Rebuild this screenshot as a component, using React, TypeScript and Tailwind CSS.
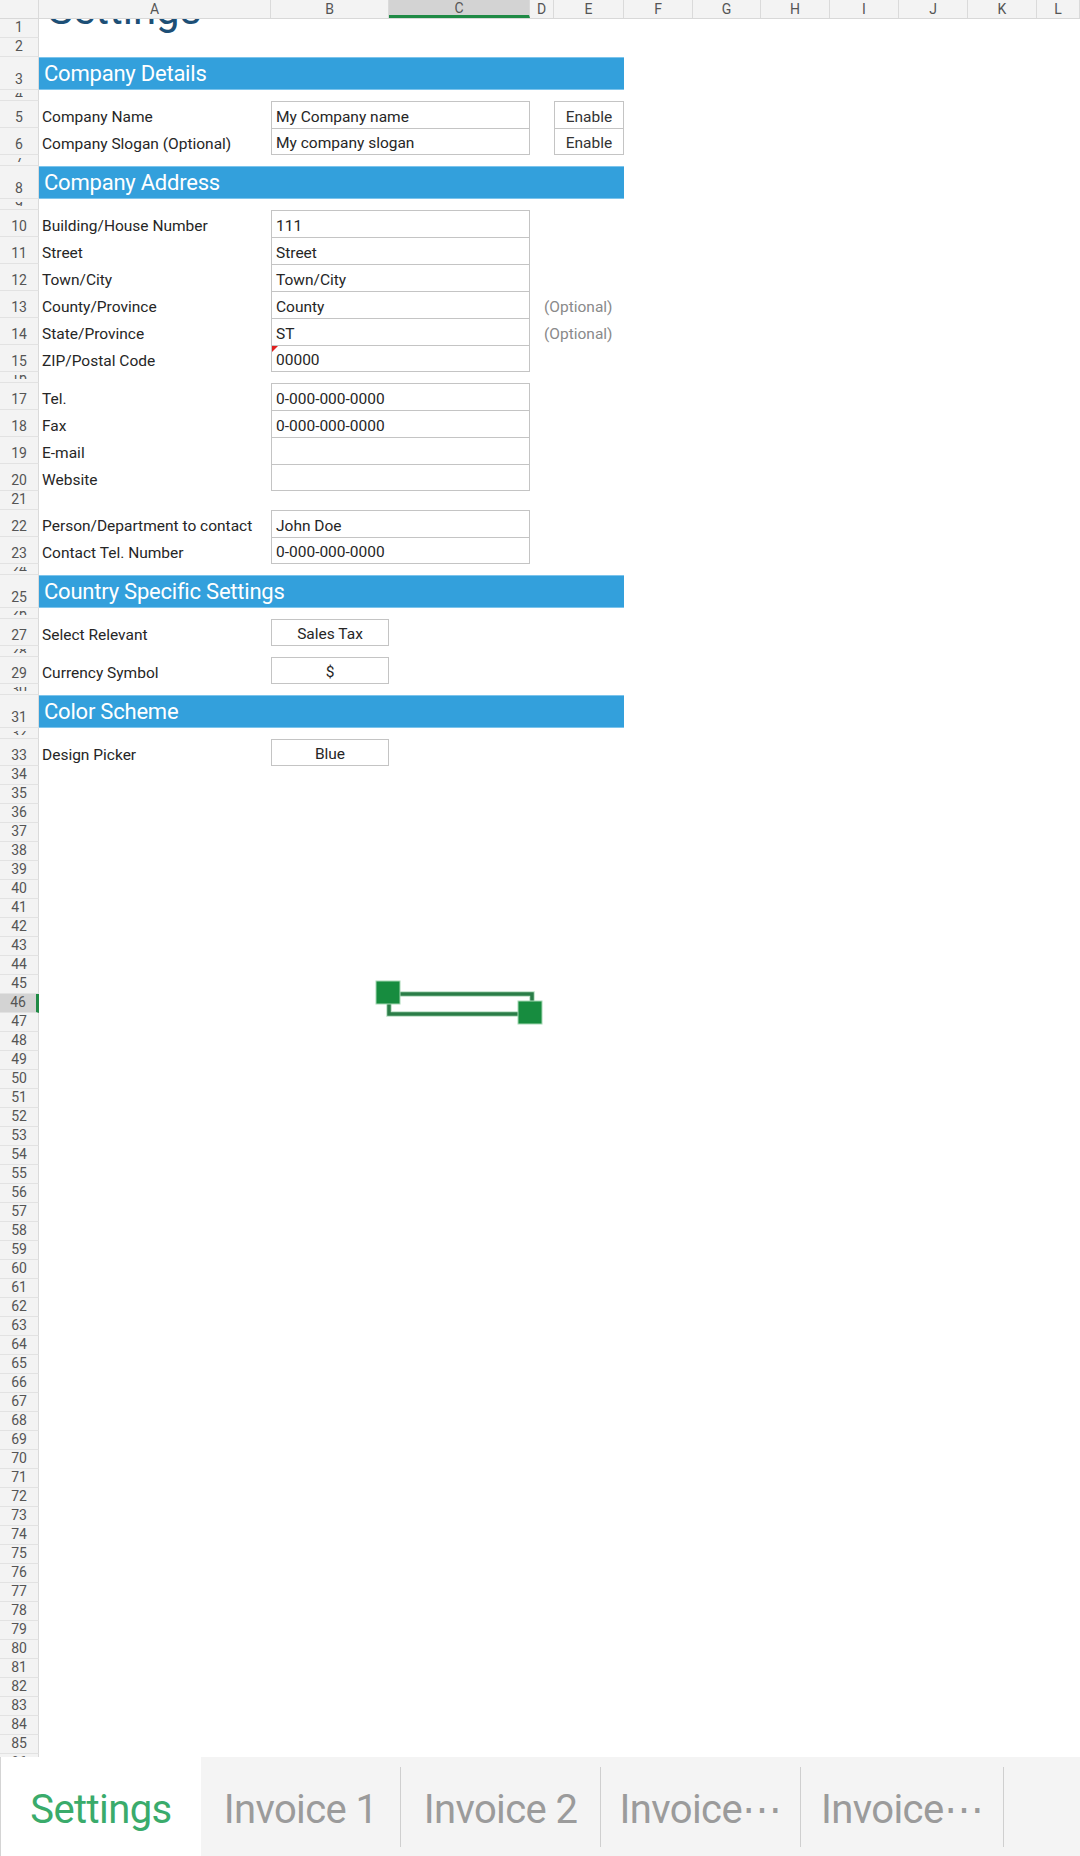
import React from "react";

type Col = { l: string; w: string; sel?: boolean };
const COLS: Col[] = [
  { l: "A", w: "w-[232px]" },
  { l: "B", w: "w-[118px]" },
  { l: "C", w: "w-[141px]", sel: true },
  { l: "D", w: "w-[24px]" },
  { l: "E", w: "w-[70px]" },
  { l: "F", w: "w-[69px]" },
  { l: "G", w: "w-[68px]" },
  { l: "H", w: "w-[69px]" },
  { l: "I", w: "w-[69px]" },
  { l: "J", w: "w-[69px]" },
  { l: "K", w: "w-[69px]" },
  { l: "L", w: "flex-1" },
];

function RowHeader({ n, sel, small }: { n: number; sel?: boolean; small?: boolean }) {
  const base = `w-[39px] shrink-0 flex justify-center overflow-hidden border-b border-[#e2e2e2] text-[14px] leading-[14px] text-[#555] ${
    sel ? "bg-[#d3d3d3] border-r-[3px] border-r-[#1f8a45]" : "bg-[#f3f3f3] border-r border-r-[#dadada]"
  }`;
  if (small) {
    return (
      <div className={`${base} items-center`}>
        <div className="h-[4px] overflow-hidden flex items-center">
          <span>{n}</span>
        </div>
      </div>
    );
  }
  return <div className={`${base} items-end pb-[3px]`}>{n}</div>;
}

function Row({ n, h, sel, small, children }: { n: number; h: string; sel?: boolean; small?: boolean; children?: React.ReactNode }) {
  return (
    <div className={`flex shrink-0 ${h}`}>
      <RowHeader n={n} sel={sel} small={small} />
      <div className="flex flex-1 min-w-0">{children}</div>
    </div>
  );
}

function Heading({ text }: { text: string }) {
  return (
    <div className="w-[585px] flex items-end bg-[#33a0dc] border-y border-[#7cc4ec] pl-[5px] pb-[2px] text-[22px] leading-[26px] text-white whitespace-nowrap tracking-[-0.01em]">
      {text}
    </div>
  );
}

const labelCls = "w-[232px] shrink-0 flex items-end pb-[2px] pl-[3px] text-[15.5px] leading-[18px] text-[#262626] whitespace-nowrap";

function Field({
  label,
  value,
  last,
  note,
  enable,
  flag,
}: {
  label: string;
  value: string;
  last?: boolean;
  note?: string;
  enable?: "top" | "bottom";
  flag?: boolean;
}) {
  return (
    <>
      <div className={labelCls}>{label}</div>
      <div
        className={`relative w-[259px] shrink-0 flex items-end pb-[2px] pl-[4px] border-x border-t border-[#c4c4c4] text-[15.5px] leading-[18px] text-[#262626] whitespace-nowrap ${
          last ? "border-b" : ""
        }`}
      >
        {flag && (
          <span className="absolute top-0 left-0 w-0 h-0 border-t-[6px] border-r-[6px] border-t-[#e02020] border-r-transparent" />
        )}
        {value}
      </div>
      <div className="w-[24px] shrink-0 flex items-end pb-[2px] text-[15.5px] leading-[18px] text-[#8a8a8a] whitespace-nowrap">
        {note && <span className="pl-[14px]">{note}</span>}
      </div>
      {enable && (
        <div
          className={`w-[70px] shrink-0 flex items-end justify-center pb-[2px] border-x border-t border-[#c4c4c4] text-[15.5px] leading-[18px] text-[#333]  ${
            enable === "bottom" ? "border-b" : ""
          }`}
        >
          Enable
        </div>
      )}
    </>
  );
}

function SmallBox({ label, value }: { label: string; value: string }) {
  return (
    <>
      <div className={labelCls}>{label}</div>
      <div className="w-[118px] shrink-0 flex items-end justify-center pb-[2px] border border-[#c4c4c4] text-[15.5px] leading-[18px] text-[#262626]">
        {value}
      </div>
    </>
  );
}

export default function App() {
  const emptyRows: number[] = [];
  for (let i = 34; i <= 86; i++) emptyRows.push(i);

  return (
    <div className="relative w-[1080px] h-[1856px] flex flex-col overflow-hidden bg-white font-['Roboto','Noto_Sans',sans-serif]">
      {/* Column header */}
      <div className="flex h-[19px] shrink-0 bg-[#f3f3f3] border-b border-[#d8d8d8]">
        <div className="w-[39px] shrink-0 border-r border-[#dadada]" />
        {COLS.map((c) => (
          <div
            key={c.l}
            className={`${c.w} shrink-0 flex items-center justify-center border-r border-[#dadada] text-[14px] leading-none text-[#555] overflow-hidden ${
              c.sel ? "bg-[#d3d3d3] border-b-[3px] border-b-[#1f8a45]" : ""
            }`}
          >
            {c.l}
          </div>
        ))}
      </div>

      {/* Sheet body */}
      <div className="flex-1 min-h-0 overflow-hidden flex flex-col">
        <Row n={1} h="h-[19px]">
          <div className="flex-1 flex items-end overflow-hidden pl-[9px]">
            <div className="mb-[7px] text-[42px] leading-[42px] text-[#1d4f76] whitespace-nowrap">Settings</div>
          </div>
        </Row>
        <Row n={2} h="h-[19px]" />
        <Row n={3} h="h-[33px]">
          <Heading text="Company Details" />
        </Row>
        <Row n={4} h="h-[11px]" small />
        <Row n={5} h="h-[27px]">
          <Field label="Company Name" value="My Company name" enable="top" />
        </Row>
        <Row n={6} h="h-[27px]">
          <Field label="Company Slogan (Optional)" value="My company slogan" last enable="bottom" />
        </Row>
        <Row n={7} h="h-[11px]" small />
        <Row n={8} h="h-[33px]">
          <Heading text="Company Address" />
        </Row>
        <Row n={9} h="h-[11px]" small />
        <Row n={10} h="h-[27px]">
          <Field label="Building/House Number" value="111" />
        </Row>
        <Row n={11} h="h-[27px]">
          <Field label="Street" value="Street" />
        </Row>
        <Row n={12} h="h-[27px]">
          <Field label="Town/City" value="Town/City" />
        </Row>
        <Row n={13} h="h-[27px]">
          <Field label="County/Province" value="County" note="(Optional)" />
        </Row>
        <Row n={14} h="h-[27px]">
          <Field label="State/Province" value="ST" note="(Optional)" />
        </Row>
        <Row n={15} h="h-[27px]">
          <Field label="ZIP/Postal Code" value="00000" last flag />
        </Row>
        <Row n={16} h="h-[11px]" small />
        <Row n={17} h="h-[27px]">
          <Field label="Tel." value="0-000-000-0000" />
        </Row>
        <Row n={18} h="h-[27px]">
          <Field label="Fax" value="0-000-000-0000" />
        </Row>
        <Row n={19} h="h-[27px]">
          <Field label="E-mail" value="" />
        </Row>
        <Row n={20} h="h-[27px]">
          <Field label="Website" value="" last />
        </Row>
        <Row n={21} h="h-[19px]" />
        <Row n={22} h="h-[27px]">
          <Field label="Person/Department to contact" value="John Doe" />
        </Row>
        <Row n={23} h="h-[27px]">
          <Field label="Contact Tel. Number" value="0-000-000-0000" last />
        </Row>
        <Row n={24} h="h-[11px]" small />
        <Row n={25} h="h-[33px]">
          <Heading text="Country Specific Settings" />
        </Row>
        <Row n={26} h="h-[11px]" small />
        <Row n={27} h="h-[27px]">
          <SmallBox label="Select Relevant" value="Sales Tax" />
        </Row>
        <Row n={28} h="h-[11px]" small />
        <Row n={29} h="h-[27px]">
          <SmallBox label="Currency Symbol" value="$" />
        </Row>
        <Row n={30} h="h-[11px]" small />
        <Row n={31} h="h-[33px]">
          <Heading text="Color Scheme" />
        </Row>
        <Row n={32} h="h-[11px]" small />
        <Row n={33} h="h-[27px]">
          <SmallBox label="Design Picker" value="Blue" />
        </Row>
        {emptyRows.map((n) => (
          <Row key={n} n={n} h="h-[19px]" sel={n === 46} />
        ))}
      </div>

      {/* Selection overlay for C46 */}
      <svg
        className="absolute left-[370px] top-[975px] pointer-events-none"
        width="180"
        height="55"
        viewBox="0 0 180 55"
      >
        <rect x="19" y="19" width="143" height="20" fill="none" stroke="#b9dfc4" strokeWidth="5.5" />
        <rect x="19" y="19" width="143" height="20" fill="none" stroke="#2a7d47" strokeWidth="3.5" />
        <rect x="6" y="6" width="24" height="23" fill="#178c3f" stroke="#a6d8b4" strokeWidth="1" />
        <rect x="148" y="26" width="24" height="23" fill="#178c3f" stroke="#a6d8b4" strokeWidth="1" />
      </svg>

      {/* Sheet tabs */}
      <div className="flex h-[99px] shrink-0 bg-[#f4f4f4] text-[40px] leading-none tracking-[-0.015em]">
        <div className="w-[201px] shrink-0 flex items-center justify-center pt-[6px] bg-white border-l border-[#d4d4d4] text-[#3aab6b]">
          Settings
        </div>
        <div className="w-[199px] shrink-0 flex items-center justify-center pt-[6px] text-[#9b9b9b]">Invoice 1</div>
        <div className="w-px h-[80px] self-center bg-[#cfcfcf]" />
        <div className="w-[199px] shrink-0 flex items-center justify-center pt-[6px] text-[#9b9b9b]">Invoice 2</div>
        <div className="w-px h-[80px] self-center bg-[#cfcfcf]" />
        <div className="w-[199px] shrink-0 flex items-center justify-center pt-[6px] text-[#9b9b9b] whitespace-nowrap">Invoice⋯</div>
        <div className="w-px h-[80px] self-center bg-[#cfcfcf]" />
        <div className="w-[202px] shrink-0 flex items-center justify-center pt-[6px] text-[#9b9b9b] whitespace-nowrap">Invoice⋯</div>
        <div className="w-px h-[80px] self-center bg-[#cfcfcf]" />
      </div>
    </div>
  );
}
